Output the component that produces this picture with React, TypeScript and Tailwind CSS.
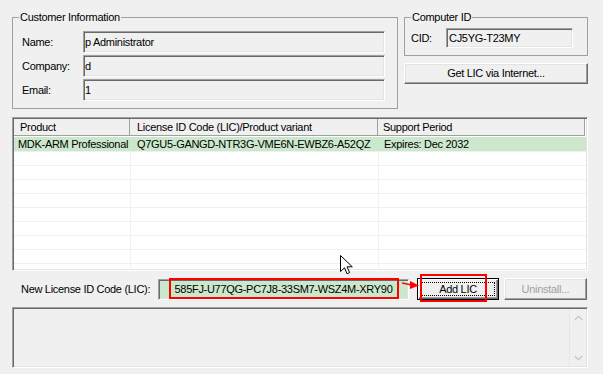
import React from "react";

const sunken =
  "border border-t-[#a0a0a0] border-l-[#a0a0a0] border-b-white border-r-white shadow-[inset_1px_1px_0_#696969,inset_-1px_-1px_0_#e3e3e3]";
const raised =
  "border border-t-white border-l-white border-b-[#696969] border-r-[#696969] shadow-[inset_-1px_-1px_0_#a0a0a0,inset_1px_1px_0_#e3e3e3] bg-[#f0f0f0]";

const customer = [
  { label: "Name:", value: "p Administrator" },
  { label: "Company:", value: "d" },
  { label: "Email:", value: "1" },
];

function Chevron({ up }: { up?: boolean }) {
  return (
    <svg width="9" height="6" viewBox="0 0 9 6">
      <path
        d={up ? "M0.8 5 L4.5 1.3 L8.2 5" : "M0.8 1 L4.5 4.7 L8.2 1"}
        fill="none"
        stroke="#c4c4c4"
        strokeWidth="1.2"
      />
    </svg>
  );
}

export default function App() {
  const emptyRows = Array.from({ length: 9 });
  return (
    <div className="relative w-[603px] h-[374px] overflow-hidden bg-[#f0f0f0] pl-[12px] pt-[11px] text-[11px] leading-[13px] tracking-[-0.3px] text-black font-['Liberation_Sans','Arial',sans-serif]">
      {/* top row */}
      <div className="flex w-[576px] gap-[6px]">
        <fieldset className="w-[386px] border border-[#a0a0a0] pb-[7px]">
          <legend className="ml-[6px] px-[1px]">Customer Information</legend>
          <div className="mt-[7px] flex flex-col gap-[2px] pl-[9px]">
            {customer.map((r) => (
              <div key={r.label} className="flex items-start">
                <span className="w-[61px] pt-[5px]">{r.label}</span>
                <div className={`w-[302px] h-[22px] pl-[1px] pt-[4px] ${sunken}`}>{r.value}</div>
              </div>
            ))}
          </div>
        </fieldset>

        <div className="flex w-[184px] flex-col gap-[7px]">
          <fieldset className="border border-[#a0a0a0] pb-[7px]">
            <legend className="ml-[6px] px-[1px]">Computer ID</legend>
            <div className="mt-[4px] flex items-center pl-[6px]">
              <span className="w-[35px]">CID:</span>
              <div className={`flex h-[20px] w-[127px] items-center pl-[2px] ${sunken}`}>CJ5YG-T23MY</div>
            </div>
          </fieldset>
          <button className={`flex h-[21px] w-full items-center justify-center ${raised}`}>
            Get LIC via Internet...
          </button>
        </div>
      </div>

      {/* list view */}
      <div className={`mt-[8px] flex h-[154px] w-[576px] flex-col overflow-hidden bg-white p-[1px] ${sunken}`}>
        <div className="flex h-[17px] shrink-0 bg-[#f0f0f0]">
          <div className="flex w-[116px] items-center border-b border-r border-[#a0a0a0] pl-[6px]">Product</div>
          <div className="flex w-[248px] items-center border-b border-r border-[#a0a0a0] pl-[7px]">
            License ID Code (LIC)/Product variant
          </div>
          <div className="flex w-[207px] items-center border-b border-r border-[#a0a0a0] pl-[5px]">Support Period</div>
          <div className="flex-1 bg-white" />
        </div>
        <div className="mt-[1px] flex flex-col">
          <div className="flex h-[14px] shrink-0 items-center bg-[#cce8cc]">
            <div className="w-[116px] whitespace-nowrap pl-[4px]">MDK-ARM Professional</div>
            <div className="w-[248px] whitespace-nowrap pl-[7px]">Q7GU5-GANGD-NTR3G-VME6N-EWBZ6-A52QZ</div>
            <div className="flex-1 whitespace-nowrap pl-[6px]">Expires: Dec 2032</div>
          </div>
          {emptyRows.map((_, i) => (
            <div key={i} className="flex h-[14px] shrink-0 border-t border-[#f0f0f0]">
              <div className="w-[117px] border-r border-[#f0f0f0]" />
              <div className="w-[248px] border-r border-[#f0f0f0]" />
              <div className="flex-1" />
            </div>
          ))}
        </div>
      </div>

      {/* new LIC row */}
      <div className="mt-[7px] flex h-[22px] w-[576px] items-center">
        <span className="ml-[9px] w-[137px] whitespace-nowrap">New License ID Code (LIC):</span>
        <div className={`flex h-[21px] w-[251px] items-center justify-center bg-[#cce8cc] ${sunken}`}>
          585FJ-U77QG-PC7J8-33SM7-WSZ4M-XRY90
        </div>
        <button className="ml-[8px] h-[22px] w-[82px] border border-black bg-[#f0f0f0] p-[3px] shadow-[inset_1px_1px_0_#fff,inset_-1px_-1px_0_#696969,inset_-2px_-2px_0_#a0a0a0]">
          <div className="flex h-full w-full items-center justify-center border border-dotted border-black">Add LIC</div>
        </button>
        <button className={`ml-[5px] flex h-[22px] w-[83px] items-center justify-center text-[#a0a0a0] ${raised}`}>
          Uninstall...
        </button>
      </div>

      {/* status box */}
      <div className={`mt-[7px] flex h-[61px] w-[576px] justify-end p-[1px] ${sunken}`}>
        <div className="flex h-full w-[17px] flex-col justify-between border-l border-[#e6e6e6]">
          <div className="flex h-[17px] items-center justify-center">
            <Chevron up />
          </div>
          <div className="flex h-[17px] items-center justify-center">
            <Chevron />
          </div>
        </div>
      </div>

      {/* annotations overlay */}
      <div className="absolute left-[169px] top-[278px] h-[21px] w-[230px] border-2 border-[#ff0000]" />
      <div className="absolute left-[420px] top-[274px] h-[28px] w-[67px] border-2 border-[#ff0000]" />
      <svg className="absolute left-[401px] top-[278px]" width="20" height="14" viewBox="0 0 20 14">
        <line x1="1" y1="5" x2="11" y2="7" stroke="#ff0000" strokeWidth="1.5" />
        <polygon points="9,3 18,7.5 9,11" fill="#ff0000" />
      </svg>

      {/* mouse cursor */}
      <svg className="absolute left-[340px] top-[255px]" width="14" height="20" viewBox="0 0 14 20">
        <path
          d="M0.5 0.5 L0.5 16.5 L4.5 12.8 L7 18.7 L9.6 17.6 L7.1 11.8 L12.3 11.8 Z"
          fill="#fff"
          stroke="#000"
          strokeWidth="1"
          strokeLinejoin="miter"
        />
      </svg>
    </div>
  );
}
